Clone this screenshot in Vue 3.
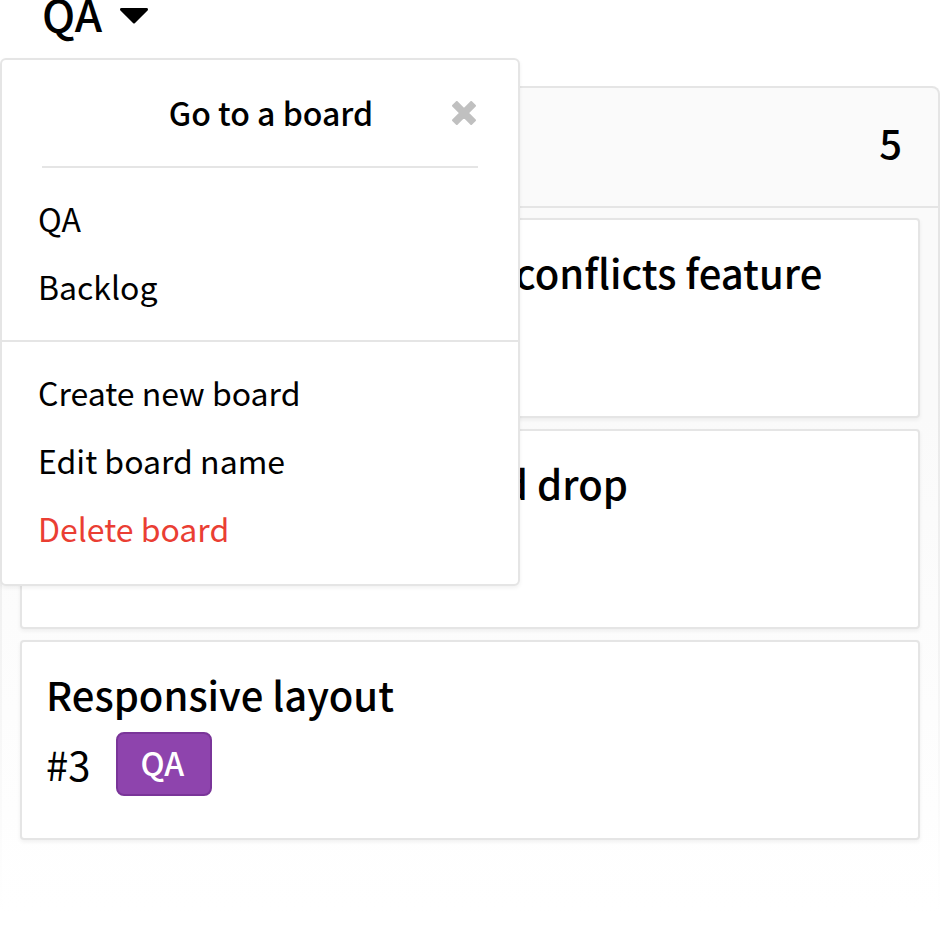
<script setup>
import { ref } from 'vue'

const open = ref(true)
const boards = ['QA', 'Backlog']
const actions = [
  { label: 'Create new board' },
  { label: 'Edit board name' },
  { label: 'Delete board', danger: true },
]
const cards = [
  { title: 'Highlight all the merged conflicts feature' },
  { title: 'Improved filters drag and drop' },
  { id: 3, title: 'Responsive layout', tag: 'QA' },
]
</script>

<template>
  <div class="page">
    <header class="topbar">
      <button class="switcher strong" type="button" :aria-expanded="open" @click="open = !open">
        QA
        <svg class="caret" viewBox="0 0 28 16" aria-hidden="true">
          <path d="M1.5 0H26.5Q28 0 28 1.4Q28 2 27.3 2.7L15 15Q14 16 13 15L.7 2.7Q0 2 0 1.4Q0 0 1.5 0Z" />
        </svg>
      </button>
      <nav v-if="open" class="menu" aria-label="Boards">
        <div class="menu-head">
          <h2 class="menu-title strong">Go to a board</h2>
          <button class="close" type="button" aria-label="Close" @click="open = false">
            <svg viewBox="0 0 24 24" aria-hidden="true">
              <path d="M4.8 1L12 8.2L19.2 1L23 4.8L15.8 12L23 19.2L19.2 23L12 15.8L4.8 23L1 19.2L8.2 12L1 4.8Z" />
            </svg>
          </button>
        </div>
        <ul class="menu-list">
          <li v-for="b in boards" :key="b"><a class="item" href="#">{{ b }}</a></li>
        </ul>
        <ul class="menu-list split">
          <li v-for="a in actions" :key="a.label">
            <button class="item" :class="{ danger: a.danger }" type="button">{{ a.label }}</button>
          </li>
        </ul>
      </nav>
    </header>

    <main class="column">
      <div class="column-head"><span class="count strong">5</span></div>
      <div class="cards">
        <article v-for="c in cards" :key="c.title" class="card">
          <h3 class="card-title strong">{{ c.title }}</h3>
          <div class="meta">
            <span v-if="c.id">#{{ c.id }}</span>
            <span v-if="c.tag" class="tag strong">{{ c.tag }}</span>
          </div>
        </article>
      </div>
    </main>
  </div>
</template>

<style>
body {
  background: #fff;
}
</style>

<style scoped>
.page {
  color: #000;
  font-family: "Noto Sans CJK JP", "Noto Sans", sans-serif;
  font-size: 32px;
}
h2, h3, ul {
  margin: 0;
  padding: 0;
}
ul {
  list-style: none;
}
button {
  padding: 0;
  border: 0;
  background: none;
  color: inherit;
  font: inherit;
  cursor: pointer;
}
.strong {
  font-weight: 500;
}
.topbar {
  position: relative;
  display: flex;
  align-items: flex-start;
  height: 86px;
  padding-left: 42px;
}
.switcher {
  display: flex;
  align-items: center;
  gap: 18px;
  font-size: 44px;
  line-height: 26px;
}
.caret {
  width: 28px;
  height: 16px;
  margin-top: 6px;
}
.menu {
  position: absolute;
  z-index: 1;
  top: 58px;
  left: 0;
  width: 520px;
  box-sizing: border-box;
  border: 2px solid #e5e5e5;
  border-radius: 6px;
  background: #fff;
  box-shadow: 0 2px 4px rgba(0, 0, 0, 0.06);
}
.menu-head {
  display: flex;
  align-items: center;
  height: 106px;
  margin: 0 40px;
  border-bottom: 2px solid #e5e5e5;
}
.menu-title {
  flex: 1;
  padding: 0 0 2px 48px;
  font-size: 32px;
  line-height: 48px;
  text-align: center;
}
.close {
  display: flex;
  width: 26px;
}
.close svg {
  width: 24px;
  height: 24px;
}
.close path {
  fill: #c0c0c0;
  stroke: #c0c0c0;
  stroke-width: 2;
  stroke-linejoin: round;
}
.menu-list {
  padding: 16px 0 20px;
}
.split {
  padding-bottom: 22px;
  border-top: 2px solid #e5e5e5;
}
.item {
  display: block;
  width: 100%;
  box-sizing: border-box;
  padding: 0 36px;
  color: #000;
  line-height: 68px;
  text-align: left;
  text-decoration: none;
}
.danger {
  color: #ea3e33;
}
.column {
  padding-bottom: 60px;
  border: 2px solid transparent;
  border-radius: 8px;
  background:
    linear-gradient(#fafafa 40%, #fff) padding-box,
    linear-gradient(#e5e5e5 30%, #fff) border-box;
}
.column-head {
  display: flex;
  justify-content: flex-end;
  padding: 24px 36px 34px;
  border-bottom: 2px solid #e5e5e5;
}
.count {
  font-size: 40px;
  line-height: 60px;
}
.cards {
  display: grid;
  gap: 11px;
  padding: 10px 18px;
}
.card {
  padding: 22px 24px 42px;
  border: 2px solid #e5e5e5;
  border-radius: 4px;
  background: #fff;
  box-shadow: 0 2px 4px rgba(0, 0, 0, 0.06);
}
.card-title {
  font-size: 40px;
  line-height: 60px;
}
.meta {
  display: flex;
  align-items: center;
  gap: 26px;
  min-height: 64px;
  margin-top: 8px;
  font-size: 40px;
  line-height: 62px;
}
.tag {
  padding: 0 26px 4px 22px;
  border: 2px solid #7a3599;
  border-radius: 8px;
  background: #8e44ad;
  color: #fff;
  font-size: 32px;
  line-height: 56px;
}
.danger {
  color: #ea3e33;
}
</style>
